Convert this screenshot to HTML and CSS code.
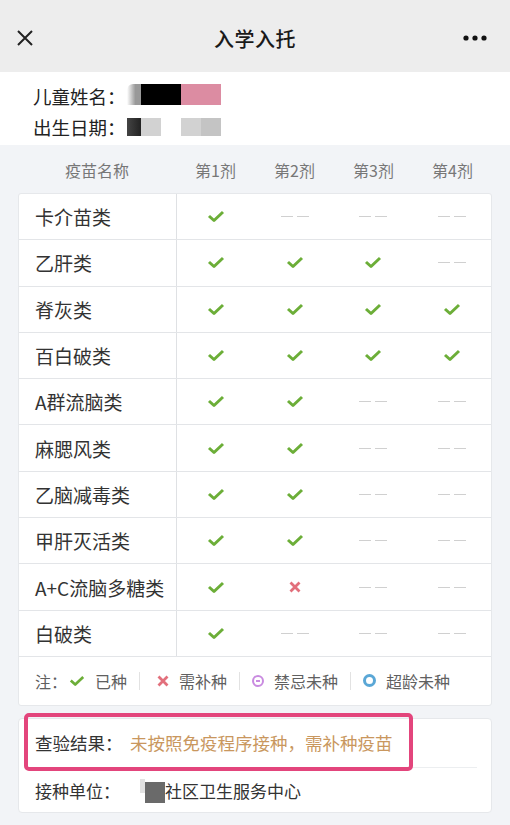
FILE: index.html
```html
<!DOCTYPE html>
<html lang="zh-CN">
<head>
<meta charset="utf-8">
<title>入学入托</title>
<link rel="stylesheet" href="styles.css">
</head>
<body>
<div class="page">
  <div class="navbar">
    <svg class="nav-close" width="18" height="16" viewBox="0 0 18 16"><path d="M2 1 L16 15 M16 1 L2 15" stroke="#222" stroke-width="2" fill="none"/></svg>
    <div class="nav-title">入学入托</div>
    <svg class="nav-more" width="26" height="6" viewBox="0 0 26 6"><circle cx="4" cy="3" r="2.6" fill="#111"/><circle cx="13" cy="3" r="2.6" fill="#111"/><circle cx="22" cy="3" r="2.6" fill="#111"/></svg>
  </div>

  <div class="info">
    <div class="info-row"><span class="info-label">儿童姓名：</span><span class="mask"><i class="m m-gray"></i><i class="m m-black"></i><i class="m m-pink"></i></span></div>
    <div class="info-row"><span class="info-label">出生日期：</span><span class="mask mask-2"><i class="m m-dark"></i><i class="m m-light"></i><i class="m m-gap"></i><i class="m m-light"></i><i class="m m-light2"></i></span></div>
  </div>

  <div class="main">
    <div class="grid thead">
      <div class="th">疫苗名称</div>
      <div class="th">第1剂</div>
      <div class="th">第2剂</div>
      <div class="th">第3剂</div>
      <div class="th">第4剂</div>
    </div>

    <div class="table" id="table"></div>

    <div class="result-card">
      <div class="highlight"></div>
      <div class="result-row">
        <span class="r-label">查验结果：</span><span class="r-warn">未按照免疫程序接种，需补种疫苗</span>
      </div>
      <div class="result-sep"></div>
      <div class="result-row result-row-2">
        <span class="r-label">接种单位：</span><span class="unit-mask"><i class="u1"></i><i class="u2"></i></span><span class="r-unit">社区卫生服务中心</span>
      </div>
    </div>
  </div>
</div>
<script>
var CHECK = '<svg class="ic-check" width="18" height="13" viewBox="0 0 18 13"><path d="M2 6 L7 10.5 L16 2" stroke="#6cae38" stroke-width="3" fill="none" stroke-linejoin="round"/></svg>';
var CROSS = '<svg class="ic-cross" width="12" height="12" viewBox="0 0 12 12"><path d="M1.5 1.5 L10.5 10.5 M10.5 1.5 L1.5 10.5" stroke="#e2707c" stroke-width="2.8" fill="none"/></svg>';
var DASH = '<span class="dash"><i></i><i></i></span>';
var rows = [
  ["卡介苗类", "1000"],
  ["乙肝类", "1110"],
  ["脊灰类", "1111"],
  ["百白破类", "1111"],
  ["A群流脑类", "1100"],
  ["麻腮风类", "1100"],
  ["乙脑减毒类", "1100"],
  ["甲肝灭活类", "1100"],
  ["A+C流脑多糖类", "1x00"],
  ["白破类", "1000"]
];
var html = '';
rows.forEach(function (r) {
  html += '<div class="grid tr"><div class="td name">' + r[0] + '</div>';
  for (var i = 0; i < 4; i++) {
    var c = r[1][i];
    html += '<div class="td">' + (c === '1' ? CHECK : c === 'x' ? CROSS : DASH) + '</div>';
  }
  html += '</div>';
});
html += '<div class="legend"><span class="lg-note">注：</span>' +
  '<span class="lg-item">' + CHECK + '<span>已种</span></span><span class="lg-sep"></span>' +
  '<span class="lg-item lg-cross">' + CROSS + '<span>需补种</span></span><span class="lg-sep"></span>' +
  '<span class="lg-item"><span class="ic-ban"><i></i></span><span>禁忌未种</span></span><span class="lg-sep"></span>' +
  '<span class="lg-item"><span class="ic-ring"></span><span>超龄未种</span></span></div>';
document.getElementById('table').innerHTML = html;
</script>
</body>
</html>
```

FILE: styles.css
```css
* { box-sizing: border-box; margin: 0; padding: 0; }
html, body {
  width: 510px;
  height: 825px;
  overflow: hidden;
  background: #f2f4f7;
  font-family: "Noto Sans CJK SC", "Noto Sans", "Liberation Sans", sans-serif;
  color: #333;
}
.page { width: 510px; height: 825px; display: flex; flex-direction: column; }

.navbar {
  height: 72px;
  background: #ededed;
  display: flex;
  align-items: center;
  justify-content: space-between;
  padding: 4px 22px 0 16px;
}
.nav-close { display: block; }
.nav-title { font-size: 20px; font-weight: 500; color: #1a1a1a; letter-spacing: 0.5px; margin-left: 14px; }
.nav-more { display: block; }

.info {
  background: #fff;
  height: 73px;
  padding: 8px 0 0 33px;
}
.info-row { height: 31px; display: flex; align-items: center; font-size: 18.5px; color: #222; white-space: nowrap; }
.info-label { flex: none; margin-right: 1px; }
.mask { display: flex; height: 21px; margin-top: -2px; }
.mask .m { display: block; height: 100%; }
.m-gray { width: 14px; background: linear-gradient(90deg, #fff, #999 60%); border-radius: 6px 0 0 0; }
.m-black { width: 40px; background: #000; }
.m-pink { width: 40px; background: #dc8ca2; }
.mask-2 { height: 18px; margin-top: 0; }
.m-dark { width: 14px; background: linear-gradient(90deg, #444, #222); }
.m-light { width: 20px; background: #d2d2d2; }
.m-gap { width: 20px; }
.m-light2 { width: 20px; background: #c4c4c4; }

.main { flex: 1; padding: 0 18px; }

.grid { display: grid; grid-template-columns: 158px repeat(4, 1fr); }
.thead { height: 48px; align-items: center; }
.th { text-align: center; font-size: 16px; color: #777; padding-top: 2px; }

.table {
  background: #fff;
  border: 1px solid #e6e8eb;
  border-radius: 3px;
}
.tr { height: 46.3px; border-bottom: 1px solid #e3e5e8; }
.td { display: flex; align-items: center; justify-content: center; }
.td.name {
  justify-content: flex-start;
  padding-left: 16px;
  font-size: 19px;
  color: #333;
  border-right: 1px solid #dfe1e4;
}
.ic-check, .ic-cross { display: block; }
.dash { display: flex; gap: 4px; }
.dash i { display: block; width: 12px; height: 1px; background: #d0d0d0; }

.legend {
  height: 48px;
  display: flex;
  align-items: center;
  padding-left: 16px;
  font-size: 16px;
  color: #606060;
}
.lg-note { margin-right: 2px; }
.lg-item { display: flex; align-items: center; gap: 10px; }
.lg-item .ic-check { width: 16px; height: 12px; }
.lg-cross { margin-left: 5px; }
.lg-sep { width: 1px; height: 18px; background: #e2e2e2; margin: 0 12px; }
.ic-ban {
  width: 12px; height: 12px; border-radius: 50%;
  border: 2.5px solid #c98be0;
  display: flex; align-items: center; justify-content: center;
}
.ic-ban i { display: block; width: 4px; height: 1.5px; background: #c98be0; }
.ic-ring {
  width: 13px; height: 13px; border-radius: 50%;
  border: 3px solid #5aa7d6;
}

.result-card {
  position: relative;
  margin-top: 12px;
  height: 95px;
  background: #fff;
  border: 1px solid #e6e8eb;
  border-radius: 4px;
}
.highlight {
  position: absolute;
  left: 5px;
  top: -6px;
  width: 389px;
  height: 58px;
  border: 4px solid #e3457c;
  border-radius: 5px;
}
.result-row {
  height: 48px;
  display: flex;
  align-items: center;
  padding: 0 0 0 16px;
  font-size: 17.5px;
}
.r-label { color: #333; width: 95px; }
.r-warn { color: #c9975e; }
.result-sep { height: 1px; background: #eceef0; margin: 0 14px 0 16px; }
.result-row-2 { height: 46px; font-size: 17px; }
.unit-mask { display: flex; align-items: flex-end; height: 24px; margin-left: 10px; width: 25px; }
.unit-mask .u1 { display: block; width: 5px; height: 14px; background: #e2e2e2; align-self: flex-start; }
.unit-mask .u2 { display: block; width: 20px; height: 21px; background: #6a6a6a; }
.r-unit { color: #333; }
```
